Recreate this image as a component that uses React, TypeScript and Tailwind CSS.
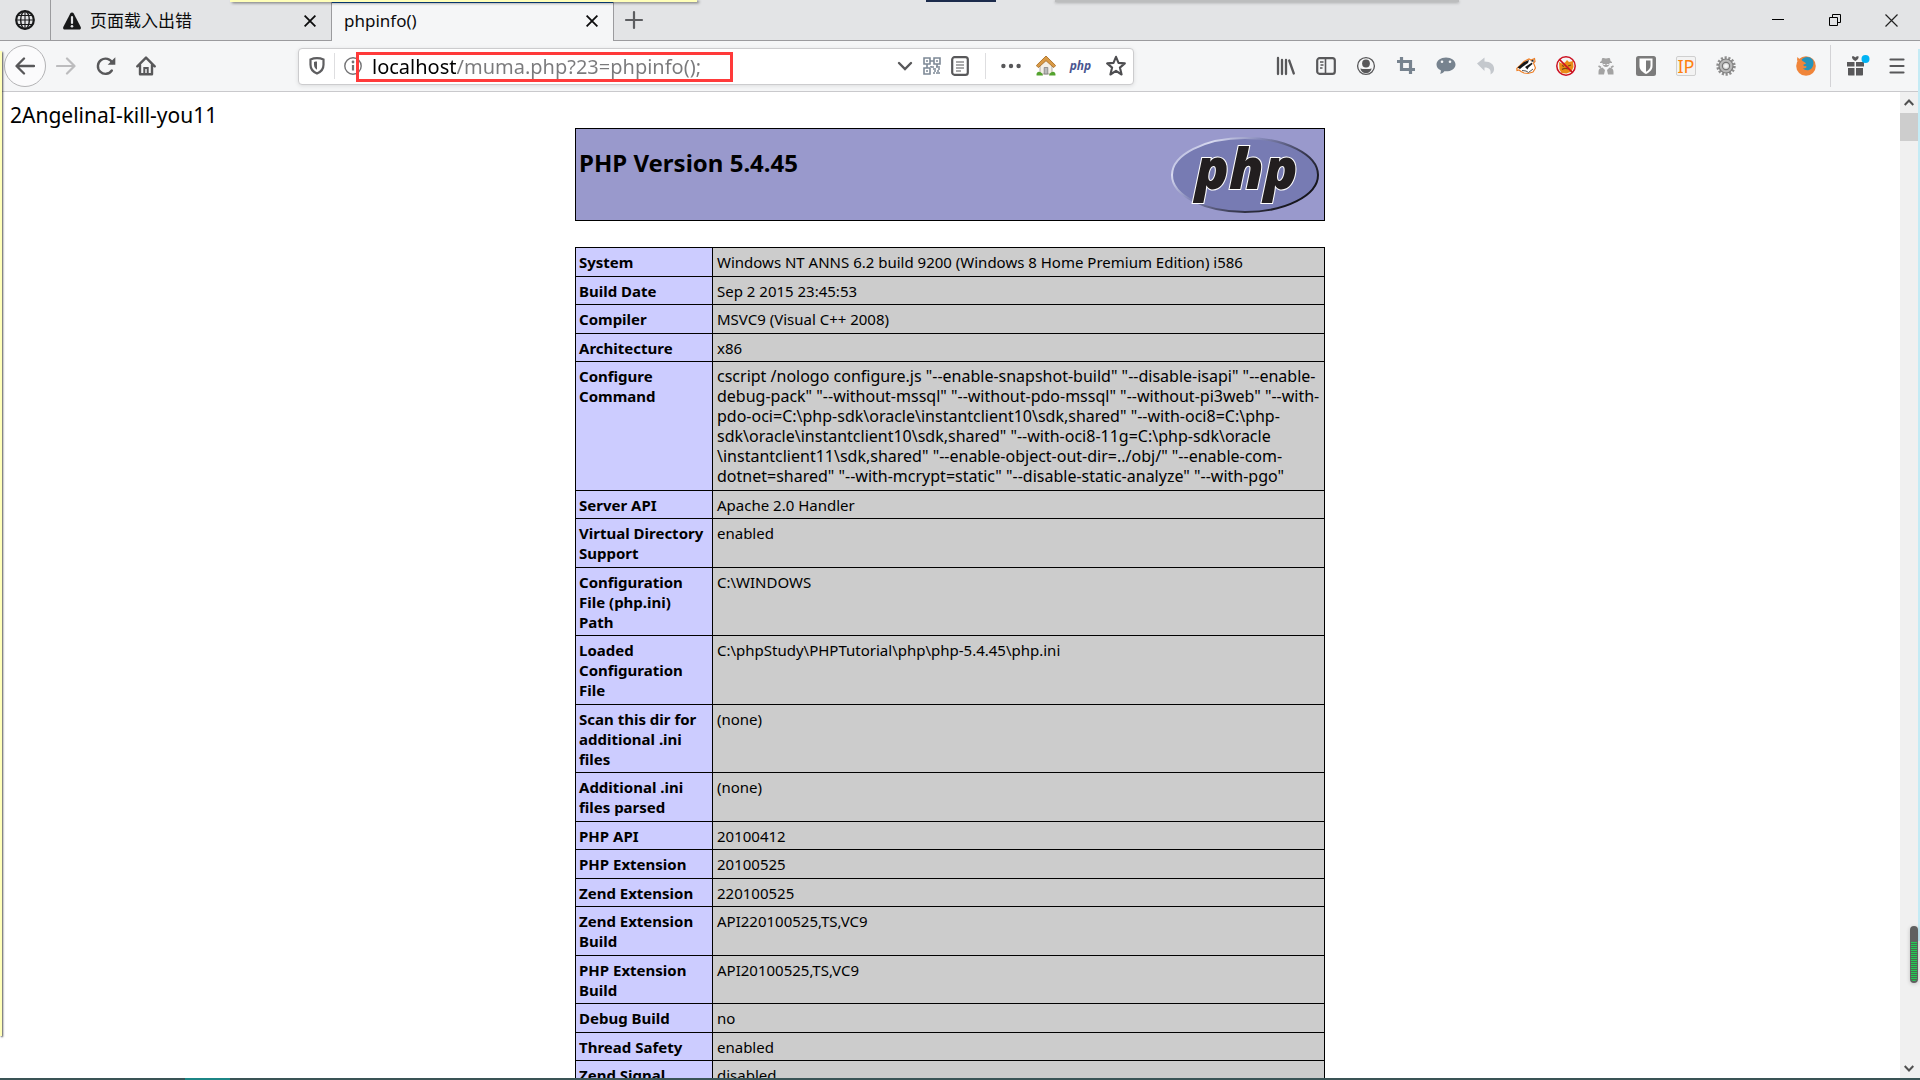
import React, { useState } from 'react';

type Row = { label: string; lines: string[] };

const rows: Row[] = [
  { label: 'System', lines: ['Windows NT ANNS 6.2 build 9200 (Windows 8 Home Premium Edition) i586'] },
  { label: 'Build Date', lines: ['Sep 2 2015 23:45:53'] },
  { label: 'Compiler', lines: ['MSVC9 (Visual C++ 2008)'] },
  { label: 'Architecture', lines: ['x86'] },
  {
    label: 'Configure Command',
    lines: [
      'cscript /nologo configure.js "--enable-snapshot-build" "--disable-isapi" "--enable-',
      'debug-pack" "--without-mssql" "--without-pdo-mssql" "--without-pi3web" "--with-',
      'pdo-oci=C:\\php-sdk\\oracle\\instantclient10\\sdk,shared" "--with-oci8=C:\\php-',
      'sdk\\oracle\\instantclient10\\sdk,shared" "--with-oci8-11g=C:\\php-sdk\\oracle',
      '\\instantclient11\\sdk,shared" "--enable-object-out-dir=../obj/" "--enable-com-',
      'dotnet=shared" "--with-mcrypt=static" "--disable-static-analyze" "--with-pgo"',
    ],
  },
  { label: 'Server API', lines: ['Apache 2.0 Handler'] },
  { label: 'Virtual Directory Support', lines: ['enabled'] },
  { label: 'Configuration File (php.ini) Path', lines: ['C:\\WINDOWS'] },
  { label: 'Loaded Configuration File', lines: ['C:\\phpStudy\\PHPTutorial\\php\\php-5.4.45\\php.ini'] },
  { label: 'Scan this dir for additional .ini files', lines: ['(none)'] },
  { label: 'Additional .ini files parsed', lines: ['(none)'] },
  { label: 'PHP API', lines: ['20100412'] },
  { label: 'PHP Extension', lines: ['20100525'] },
  { label: 'Zend Extension', lines: ['220100525'] },
  { label: 'Zend Extension Build', lines: ['API220100525,TS,VC9'] },
  { label: 'PHP Extension Build', lines: ['API20100525,TS,VC9'] },
  { label: 'Debug Build', lines: ['no'] },
  { label: 'Thread Safety', lines: ['enabled'] },
  { label: 'Zend Signal Handling', lines: ['disabled'] },
];

const Icon = ({ children, className = '' }: { children: React.ReactNode; className?: string }) => (
  <svg width="20" height="20" viewBox="0 0 20 20" fill="none" className={className} aria-hidden="true">
    {children}
  </svg>
);

const ToolButton = ({ label, children }: { label: string; children: React.ReactNode }) => (
  <button type="button" aria-label={label} className="flex h-10 w-10 shrink-0 items-center justify-center">
    {children}
  </button>
);

const CloseX = () => (
  <svg width="12" height="12" viewBox="0 0 12 12" stroke="#0c0c0d" strokeWidth="1.8" aria-hidden="true">
    <path d="M0.6 0.6L11.4 11.4M11.4 0.6L0.6 11.4" />
  </svg>
);

const TabBar = () => (
  <div className="flex h-[41px] shrink-0 bg-[#e3e4e6] text-[17px] text-[#0c0c0d]">
    <button type="button" aria-label="Pinned tab" className="flex w-[51px] items-center justify-center border-r border-b border-[#9b9b9e]">
      <Icon>
        <circle cx="10" cy="10" r="8.8" stroke="#18191a" strokeWidth="2.2" />
        <ellipse cx="10" cy="10" rx="4.3" ry="8.8" stroke="#18191a" strokeWidth="1.4" />
        <path d="M10 1v18M1 10h18M2.5 5.5h15M2.5 14.5h15" stroke="#18191a" strokeWidth="1.1" />
      </Icon>
    </button>
    <div className="flex w-[281px] items-center border-r border-b border-[#9b9b9e] pt-[2px] pr-[15px] pl-3">
      <svg width="18" height="18" viewBox="0 0 18 18" aria-hidden="true">
        <path d="M9 0.5c.8 0 1.3.4 1.7 1.1l6.9 13.2c.7 1.5 0 2.7-1.5 2.7H1.9c-1.5 0-2.2-1.2-1.5-2.7L7.3 1.6C7.7.9 8.2.5 9 .5z" fill="#18191a" />
        <path d="M9 5v6" stroke="#e3e4e6" strokeWidth="2.2" strokeLinecap="round" />
        <circle cx="9" cy="14.3" r="1.3" fill="#e3e4e6" />
      </svg>
      <span className="ml-[9px] flex-1">页面载入出错</span>
      <button type="button" aria-label="Close tab"><CloseX /></button>
    </div>
    <div className="flex w-[282px] items-center border-r border-[#9b9b9e] bg-[#f5f6f7] pr-[15px] pl-3">
      <span className="flex-1">phpinfo()</span>
      <button type="button" aria-label="Close tab"><CloseX /></button>
    </div>
    <div className="flex flex-1 items-center border-b border-[#9b9b9e] pl-[10px]">
      <button type="button" aria-label="New tab">
        <Icon><path d="M10 2v16M2 10h16" stroke="#5c5d60" strokeWidth="2.2" strokeLinecap="round" /></Icon>
      </button>
      <div className="ml-auto flex">
        <button type="button" aria-label="Minimize" className="flex h-10 w-[57px] items-center justify-center">
          <svg width="12" height="12" aria-hidden="true"><path d="M0 5.5h12" stroke="#000" /></svg>
        </button>
        <button type="button" aria-label="Restore" className="flex h-10 w-[57px] items-center justify-center">
          <svg width="12" height="12" fill="none" stroke="#000" aria-hidden="true">
            <path d="M0.5 3.5h8v8h-8zM3.5 3.5v-3h8v8h-3" />
          </svg>
        </button>
        <button type="button" aria-label="Close window" className="flex h-10 w-[57px] items-center justify-center">
          <svg width="13" height="13" stroke="#222" strokeWidth="1.2" aria-hidden="true"><path d="M0.5 0.5l12 12M12.5 0.5l-12 12" /></svg>
        </button>
      </div>
    </div>
  </div>
);

const AddressBar = () => {
  const [url, setUrl] = useState('localhost/muma.php?23=phpinfo();');

  return (
    <div className="relative flex h-[37px] w-[836px] items-center rounded-sm border border-[#ccccce] bg-white shadow-[0_1px_4px_rgba(0,0,0,0.1)]">
      <button type="button" aria-label="Tracking protection" className="flex w-[35px] justify-center">
        <Icon>
          <path d="M10 2.2c2.5 0 4.5.4 6.5 1.2v5.4c0 4.3-2.6 7.2-6.5 8.7-3.9-1.5-6.5-4.4-6.5-8.7V3.4c2-.8 4-1.2 6.5-1.2z" stroke="#5e5e60" strokeWidth="2.2" />
          <path d="M10 5.6v8.2c-2-1.2-3-2.9-3-5V6c1-.3 2-.4 3-.4z" fill="#5e5e60" />
        </Icon>
      </button>
      <div className="h-[26px] w-px bg-[#dedee0]" />
      <button type="button" aria-label="Site information" className="flex w-[35px] justify-center">
        <Icon>
          <circle cx="10" cy="10" r="8.2" stroke="#737375" strokeWidth="1.4" />
          <path d="M10 9v5.5" stroke="#737375" strokeWidth="2.2" />
          <circle cx="10" cy="6" r="1.4" fill="#737375" />
        </Icon>
      </button>
      {/* host part is black, the rest of the address is grey */}
      <input
        aria-label="Address"
        value={url}
        onChange={(e) => setUrl(e.target.value)}
        className="ml-[2px] h-8 min-w-0 flex-1 bg-linear-[90deg,#000_84px,#7a7a7c_84px] bg-clip-text text-xl text-transparent outline-none"
      />
      <button type="button" aria-label="History" className="flex w-[26px] justify-center">
        <svg width="16" height="10" fill="none" stroke="#58585a" strokeWidth="2.4" strokeLinecap="round" aria-hidden="true"><path d="M2 2l6 6 6-6" /></svg>
      </button>
      <button type="button" aria-label="QR code" className="flex w-7 justify-center">
        <Icon>
          <g stroke="#7d8996" strokeWidth="1.6">
            <path d="M2 2h6v6H2zM12 2h6v6h-6zM2 12h6v6H2z" />
            <path d="M4 5h2M14 5h2M4 15h2M8 5h4M5 8v4M15 8v3M9 11h3M11 13h3M14 11h4M16 13h2M12 15h2M15 15h2M11 17h2M14 17h4M9 10v1" />
          </g>
        </Icon>
      </button>
      <button type="button" aria-label="Reader view" className="flex w-7 justify-center">
        <Icon>
          <rect x="2.2" y="1.2" width="15.6" height="17.6" rx="2.4" stroke="#58585a" strokeWidth="2.2" />
          <path d="M6 6h8M6 9h8M6 12h8M6 15h5" stroke="#58585a" strokeWidth="1.2" />
        </Icon>
      </button>
      <div className="mx-[11px] h-[26px] w-px bg-[#dedee0]" />
      <button type="button" aria-label="Page actions" className="flex w-7 justify-center">
        <Icon><g fill="#58585a"><circle cx="2.4" cy="10" r="2.2" /><circle cx="10" cy="10" r="2.2" /><circle cx="17.6" cy="10" r="2.2" /></g></Icon>
      </button>
      <button type="button" aria-label="Home page" className="ml-[3px] flex w-[35px] justify-center">
        <Icon>
          <path d="M4 9l6-6 6 6v9H4z" fill="#f3efe6" stroke="#a29a8b" strokeWidth="0.8" />
          <path d="M8.2 11.5h3.6V18H8.2z" fill="#b9b9b9" stroke="#777" strokeWidth="0.7" />
          <path d="M10 0L0.3 9.6l2 2L10 4.7l7.7 6.9 2-2z" fill="#d99a45" stroke="#a5661a" strokeWidth="0.8" />
          <path d="M0.5 19c-.3-3 3-5 6-1l.5 1.6H0.6zM19.5 19c.3-3-3-5-6-1l-.5 1.6h6.4z" fill="#54a32f" />
        </Icon>
      </button>
      <button type="button" aria-label="PHP" className="w-[35px] text-xs font-bold text-[#4a5590] italic">php</button>
      <button type="button" aria-label="Bookmark" className="flex w-[35px] justify-center">
        <svg width="20" height="22" viewBox="0 0 20 22" fill="none" stroke="#4d4d50" strokeWidth="2.1" strokeLinejoin="round" aria-hidden="true">
          <path d="M10 1.8l2.5 6.1 6.3.5-4.9 4.2 1.7 6.9L10 15.8l-5.6 3.7 1.7-6.9L1.2 8.4l6.3-.5z" />
        </svg>
      </button>
      {/* highlight frame drawn over the address */}
      <div className="pointer-events-none absolute top-[3px] left-[57px] h-[30px] w-[377px] border-3 border-[#ff3a3a]" />
    </div>
  );
};

const Extensions = () => (
  <div className="flex shrink-0 items-center">
    <ToolButton label="Library">
      <Icon><path d="M2 2v16M6 4v14M10 4v14M13.2 4.5l4.6 13" stroke="#58585a" strokeWidth="2.3" strokeLinecap="round" /></Icon>
    </ToolButton>
    <ToolButton label="Sidebars">
      <Icon>
        <rect x="1.2" y="2.2" width="17.6" height="15.6" rx="2.4" stroke="#58585a" strokeWidth="2.2" />
        <path d="M9.5 2v16" stroke="#58585a" strokeWidth="1.6" />
        <path d="M4 6h3.5M4.5 9h3M4 12h2.5" stroke="#58585a" strokeWidth="1.4" />
      </Icon>
    </ToolButton>
    <ToolButton label="Account">
      <Icon>
        <circle cx="10" cy="10" r="8.4" stroke="#58585a" strokeWidth="1.3" />
        <circle cx="10" cy="7.5" r="3.9" fill="#58585a" />
        <path d="M4.6 12.2c1.5 1.2 9.3 1.2 10.8 0 .3 2.5-2.2 4.8-5.4 4.8s-5.700-2.3-5.4-4.8z" fill="#58585a" />
      </Icon>
    </ToolButton>
    <ToolButton label="Screenshot crop">
      <Icon><path d="M1 5.5h13.5V18M5.5 1v12.5H19" stroke="#77838f" strokeWidth="3.2" /></Icon>
    </ToolButton>
    <ToolButton label="Chat">
      <Icon>
        <path d="M10 1.5c5.3 0 9.5 3 9.5 6.9 0 4-4.2 6.9-9.5 6.9-.6 0-1.2 0-1.7-.1-.8 1.3-2.3 2.4-4.3 2.5.8-1.2 1-2.2.8-3.5C2 13 .5 10.9.5 8.4.5 4.5 4.7 1.5 10 1.5z" fill="#77838f" />
        <circle cx="6" cy="5.8" r="1.3" fill="#f5f6f7" /><circle cx="14" cy="5.8" r="1.3" fill="#f5f6f7" />
      </Icon>
    </ToolButton>
    <ToolButton label="Undo">
      <Icon><path d="M1 7.5L8.5 1.5v4c6 0 10 3 9.6 8-.2 2.3-1.5 4-3.6 5 .8-4.5-1-7-6-7v3.5z" fill="#c4c8cd" /></Icon>
    </ToolButton>
    <ToolButton label="Privacy Badger">
      <Icon>
        <path d="M0.8 12.5L4 9.5l4-4L13 3l2 1 3.5-1.500.5 3-1.500 1.500 2 5-2.500 4-5 1.500-4-.500-3-1.500-2-1.500-2 .500z" fill="#fff" stroke="#ee7f26" strokeWidth="1.2" />
        <path d="M1.500 11.500L8 6l5-2-1 3-5 3.500-3 2.500zM9 11l7-4.500.5 1.500-4 3.500-1 2zM14.500 5l3-1.500v2.500z" fill="#181818" />
        <path d="M6 14.500l4 .500 2.500 1.500 4.500-3.500" stroke="#555" strokeWidth="1" />
      </Icon>
    </ToolButton>
    <ToolButton label="Blocked">
      <Icon>
        <path d="M3 6l3 1.5 3-1L11 4l2 2 4-1 .5 6-2 4.5-5 2-5-.5-2-3.5z" fill="#ea8c17" />
        <path d="M6 13.5c2-1.5 4-1.5 6.5-.5M6 9.5l2 1M12 10l3-1" stroke="#7a4a12" strokeWidth="1.3" />
        <circle cx="10" cy="10" r="9.2" stroke="#cc1122" strokeWidth="1.5" />
        <path d="M3.6 3.6l12.8 12.8" stroke="#cc1122" strokeWidth="1.5" />
      </Icon>
    </ToolButton>
    <ToolButton label="User agent">
      <Icon>
        <g fill="#a3a3a3">
          <path d="M6 2.5c1.5-1 2.500 0 4 0s2.500-1 4 0l.5 2.500 1.500 1v1H4V6l1.500-1z" />
          <path d="M6.500 7h7c0 2.500-1.500 4-3.500 4S6.500 9.500 6.500 7z" />
          <path d="M2.500 18.500V16c0-3 1.500-4 4-4.500L9 14l-1 4.500zM17.500 18.500V16c0-3-1.500-4-4-4.500L11 14l1 4.500z" />
          <path d="M5 11.500L2.500 10M15 11.500l2.500-1.500" stroke="#a3a3a3" strokeWidth="1.6" />
        </g>
        <path d="M7.300 8.500h2M10.700 8.500h2" stroke="#f5f6f7" strokeWidth="1.1" />
      </Icon>
    </ToolButton>
    <ToolButton label="Bitwarden">
      <Icon>
        <rect width="20" height="20" rx="2.5" fill="#7b7b7b" />
        <path d="M3.5 2.5h13V10c0 4-3.5 6.5-6.5 8-3-1.5-6.500-4-6.500-8z" fill="#fff" />
        <path d="M10 4.5h4.5V10c0 2.6-2.2 4.5-4.5 5.7z" fill="#7b7b7b" />
      </Icon>
    </ToolButton>
    <ToolButton label="IP">
      <span className="flex h-5 w-5 items-center justify-center rounded-xs border border-[#cfcfcf] bg-[#f3f3f3] text-lg leading-4 text-[#ff7f0e]">IP</span>
    </ToolButton>
    <ToolButton label="Settings">
      <Icon>
        <circle cx="10" cy="10" r="8.2" stroke="#8e8e8e" strokeWidth="3" strokeDasharray="2.1 1.6" />
        <circle cx="10" cy="10" r="7" fill="#b9b9b9" stroke="#7e7e7e" strokeWidth="1.2" />
        <circle cx="10" cy="10" r="3.6" fill="#dedede" stroke="#777" strokeWidth="1.2" />
        <circle cx="10" cy="10" r="1.8" fill="#f5f6f7" />
      </Icon>
    </ToolButton>
    <div className="w-10" />
    <ToolButton label="Firefox">
      <Icon>
        <circle cx="10" cy="10" r="9.8" fill="#f0853a" />
        <path d="M5.5 4c2-3.5 8-4.5 11-.5 1.5 2 1.3 6.5-1 9-2.5 2.5-6.5 2.3-8.7-.2 2 .4 3.2-.3 4-1.6-1.3-.4-3-.3-3.6-1.6.7-.8 1.8-.8 2.8-1.3-.5-1.4-2.6-2-4.5-3.8z" fill="#2594bd" />
        <path d="M1 5l.3-4L4 3.5z" fill="#f0853a" />
      </Icon>
    </ToolButton>
    <div className="mx-1 h-[42px] w-px bg-[#d3d3d6]" />
    <button type="button" aria-label="What's new" className="flex h-10 w-[46px] items-center justify-center">
      <svg width="24" height="22" viewBox="0 0 24 22" aria-hidden="true">
        <path d="M1 7h7.5v4.5H1zM10 7h8v4.5h-8zM2 13h6.5v7.5H3c-.6 0-1-.4-1-1zM10 13h7v6.5c0 .6-.4 1-1 1h-6z" fill="#58585a" />
        <path d="M6 1.5c1.5-.8 2.5 0 3.3 1 .8-1 1.8-1.8 3.3-1C13 4 11 5 9.3 6 7.6 5 5.6 4 6 1.5z" fill="#58585a" />
        <circle cx="19.5" cy="4" r="4" fill="#00b3f4" />
      </svg>
    </button>
    <button type="button" aria-label="Menu" className="flex h-10 w-8 items-center justify-center">
      <svg width="16" height="16" stroke="#58585a" strokeWidth="2.2" strokeLinecap="round" aria-hidden="true"><path d="M1.5 1.5h13M1.5 8h13M1.5 14.5h13" /></svg>
    </button>
  </div>
);

const NavBar = () => (
  <div className="flex h-[51px] shrink-0 items-center border-b border-[#c9c9cc] bg-[#f5f6f7] pr-[7px] pl-1">
    <button type="button" aria-label="Back" className="flex h-[42px] w-[42px] shrink-0 items-center justify-center rounded-full border border-[#b3b3b5] bg-[#fbfbfc]">
      <Icon><path d="M19 10H2M9 2.5L1.5 10 9 17.5" stroke="#58585a" strokeWidth="2.3" strokeLinecap="round" strokeLinejoin="round" /></Icon>
    </button>
    <ToolButton label="Forward">
      <Icon><path d="M1 10h17M11 2.5l7.5 7.5-7.5 7.5" stroke="#bcbcbe" strokeWidth="2.2" strokeLinecap="round" strokeLinejoin="round" /></Icon>
    </ToolButton>
    <ToolButton label="Reload">
      <Icon>
        <path d="M15.8 14.5a7.6 7.6 0 1 1 .6-7.5" stroke="#58585a" strokeWidth="2.4" strokeLinecap="round" />
        <path d="M19.3 1.2v7.6h-7.6z" fill="#58585a" />
      </Icon>
    </ToolButton>
    <ToolButton label="Home">
      <Icon>
        <path d="M1.3 10.3L10 1.6l8.7 8.7M4 9v9.2h12V9" stroke="#58585a" strokeWidth="2.4" strokeLinecap="round" strokeLinejoin="round" />
        <path d="M8.3 18.5v-6.5h3.4v6.5" stroke="#58585a" strokeWidth="2" />
      </Icon>
    </ToolButton>
    <div className="flex-1" />
    <AddressBar />
    <div className="flex-1" />
    <Extensions />
  </div>
);

const PhpLogo = () => (
  <svg width="150" height="83" viewBox="0 0 150 83" role="img" aria-label="PHP logo" className="shrink-0 overflow-visible">
    <defs>
      <linearGradient id="rim" x1="0" y1="0" x2="1" y2="0.6">
        <stop offset="0" stopColor="#8f93c4" />
        <stop offset="0.22" stopColor="#d8daf0" />
        <stop offset="0.45" stopColor="#8488b8" />
        <stop offset="0.75" stopColor="#3a3b52" />
        <stop offset="1" stopColor="#16161c" />
      </linearGradient>
    </defs>
    <ellipse cx="75" cy="42" rx="73" ry="37" fill="#777bb3" stroke="url(#rim)" strokeWidth="2" />
    <text
      x="25"
      y="56"
      fontSize="56"
      fontWeight="800"
      fontStyle="italic"
      fill="#221e1f"
      stroke="#fff"
      strokeWidth="2"
      paintOrder="stroke"
      className="font-['Open_Sans',sans-serif]"
    >
      php
    </text>
  </svg>
);

const PhpInfo = () => (
  <div className="min-w-0 flex-1 overflow-hidden bg-white pt-[10px] text-black">
    <p className="px-[10px] text-[21px] leading-[26px]">2AngelinaI-kill-you11</p>
    <div className="mx-auto flex w-[750px] items-start justify-between border border-black bg-[#9999cc] py-1 pr-1 pl-[3px]">
      <h1 className="pt-[14px] text-2xl leading-8 font-bold">PHP Version 5.4.45</h1>
      <PhpLogo />
    </div>
    <table className="mx-auto mt-[26px] w-[750px] table-fixed border-collapse text-[15px] leading-5">
      <tbody>
        {rows.map((row) => (
          <tr key={row.label} className="group align-top">
            <th scope="row" className="w-[137px] border border-black bg-[#ccccff] px-[3px] py-1 text-left font-bold group-even:pb-[3px]">
              {row.label}
            </th>
            <td className="border border-black bg-[#cccccc] px-1 py-1 group-even:pb-[3px]">
              {row.lines.map((line) => (
                <div key={line} className={row.lines.length > 1 ? 'text-base leading-5 whitespace-nowrap' : 'whitespace-nowrap'}>
                  {line}
                </div>
              ))}
            </td>
          </tr>
        ))}
      </tbody>
    </table>
  </div>
);

const ScrollBar = () => (
  <div className="flex w-[18px] shrink-0 flex-col bg-[#f0f0f0]">
    <button type="button" aria-label="Scroll up" className="flex h-[21px] items-center justify-center">
      <svg width="10" height="7" fill="none" stroke="#505050" strokeWidth="2" aria-hidden="true"><path d="M0.7 6L5 1.5 9.3 6" /></svg>
    </button>
    <div className="h-7 bg-[#cdcdcd]" />
    <button type="button" aria-label="Scroll down" className="mt-auto flex h-5 items-center justify-center">
      <svg width="10" height="7" fill="none" stroke="#505050" strokeWidth="2" aria-hidden="true"><path d="M0.7 1L5 5.5 9.3 1" /></svg>
    </button>
  </div>
);

// Bits of other windows that peek out over the browser
const DesktopOverlays = () => (
  <div className="pointer-events-none">
    <div className="absolute top-[2px] left-[332px] h-px w-[281px] bg-[#0a4f9e]" />
    <div className="absolute top-0 left-[230px] h-[2px] w-[467px] bg-[#ffffb9] shadow-[2px_1px_3px_rgba(0,0,0,0.6)]" />
    <div className="absolute top-[51px] bottom-11 left-0 w-[2px] bg-[#ffffb9] shadow-[1px_1px_2px_rgba(0,0,0,0.7)]" />
    <div className="absolute top-0 left-[926px] h-[2px] w-[70px] bg-[#1c2b4c]" />
    <div className="absolute top-0 left-[1055px] h-[2px] w-[404px] bg-[#bcbdbe] shadow-[0_1px_3px_rgba(0,0,0,0.3)]" />
    <div className="absolute top-[49px] right-0 h-[892px] w-[2px] bg-[#c5ebf5]" />
    <div className="absolute top-[926px] right-[2px] flex h-[57px] w-2 flex-col overflow-hidden rounded-full bg-[#606060] px-px pt-4 pb-[2px] shadow-[0_1px_4px_rgba(0,0,0,0.2)]">
      <div className="flex-1 rounded-b-full bg-[repeating-linear-gradient(#22cc55_0_1px,#4a6b50_1px_2px)]" />
    </div>
  </div>
);

const App = () => (
  <div className="relative flex h-screen flex-col overflow-hidden bg-white font-['Noto_Sans','Noto_Sans_CJK_SC',sans-serif]">
    <TabBar />
    <NavBar />
    <div className="flex min-h-0 flex-1">
      <PhpInfo />
      <ScrollBar />
      <div className="w-[2px] bg-[#f0f0f0]" />
    </div>
    <div className="flex h-[2px] shrink-0 bg-[#3a5456]">
      <div className="ml-[185px] w-[45px] bg-[#1c8686]" />
    </div>
    <DesktopOverlays />
  </div>
);

export default App;
